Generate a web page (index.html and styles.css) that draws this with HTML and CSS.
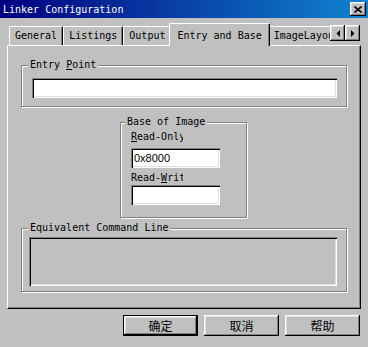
FILE: index.html
```html
<!DOCTYPE html>
<html lang="en">
  <head>
    <meta charset="UTF-8" />
    <title>Linker Configuration</title>
    <link rel="stylesheet" href="styles.css">
  </head>
  <body>
    <div class="titlebar">
      <span class="title">Linker Configuration</span>
      <div class="close">
        <svg width="8" height="7" viewBox="0 0 8 7">
          <path d="M0.5 0.5 L7.5 6.5 M7.5 0.5 L0.5 6.5" stroke="#000" stroke-width="1.6" fill="none" />
        </svg>
      </div>
    </div>

    <div class="tabstrip">
      <div class="tabs">
        <div class="tab">General</div>
        <div class="tab">Listings</div>
        <div class="tab">Output</div>
        <div class="tab active">Entry and Base</div>
        <div class="tab">ImageLayout</div>
      </div>
      <div class="scroll">
        <div class="arrow">
          <svg width="4" height="7" viewBox="0 0 4 7"><polygon points="4,0 4,7 0.5,3.5" fill="#000" /></svg>
        </div>
        <div class="arrow">
          <svg width="4" height="7" viewBox="0 0 4 7"><polygon points="0,0 0,7 3.5,3.5" fill="#000" /></svg>
        </div>
      </div>
    </div>

    <div class="panel">
      <div class="group entry">
        <div class="legend">Entry <u>P</u>oint</div>
        <div class="field entry-field"></div>
      </div>

      <div class="group base">
        <div class="legend">Base of Image</div>
        <div class="label"><u>R</u>ead-Only</div>
        <div class="field base-field">0x8000</div>
        <div class="label">Read-<u>W</u>rite</div>
        <div class="field base-field"></div>
      </div>

      <div class="group command">
        <div class="legend">Equivalent Command Line</div>
        <div class="field command-box"></div>
      </div>
    </div>

    <div class="buttons">
      <div class="btn default">确定</div>
      <div class="btn">取消</div>
      <div class="btn">帮助</div>
    </div>
  </body>
</html>
```

FILE: styles.css
```css
body {
  margin: 0;
  width: 368px;
  height: 347px;
  overflow: hidden;
  background-color: #c0c0c0;
  font-family: 'DejaVu Sans Mono', monospace;
  font-size: 10px;
  color: #000;
}
.titlebar {
  height: 18px;
  display: flex;
  align-items: center;
  padding-left: 3px;
  background: linear-gradient(to right, #000080 0%, #1084d0 100%);
  color: #fff;
}
.title {
  flex: 1;
}
.close {
  width: 16px;
  height: 14px;
  margin-right: 2px;
  display: flex;
  align-items: center;
  justify-content: center;
  background-color: #c0c0c0;
  box-shadow: inset -1px -1px #000, inset 1px 1px #fff, inset -2px -2px #808080,
    inset 2px 2px #dfdfdf;
}
.tabstrip {
  display: flex;
  height: 28px;
  margin: 0 8px -1px 7px;
  position: relative;
  z-index: 1;
}
.tabs {
  flex: 1;
  display: flex;
  align-items: flex-end;
  overflow: hidden;
  padding-left: 2px;
}
.tab {
  flex-shrink: 0;
  box-sizing: border-box;
  height: 19px;
  margin-bottom: 1px;
  padding: 0 5px;
  border: 1px solid #fff;
  border-bottom: 0;
  border-right-color: #000;
  border-radius: 2px 2px 0 0;
  box-shadow: inset -1px 0 #808080;
  line-height: 18px;
  white-space: nowrap;
}
.tab.active {
  height: 23px;
  margin: 0 -2px;
  padding: 3px 7px 0;
  background-color: #c0c0c0;
  position: relative;
}
.scroll {
  display: flex;
  align-self: flex-start;
  margin-top: 7px;
}
.arrow {
  width: 15px;
  height: 16px;
  display: flex;
  align-items: center;
  justify-content: center;
  background-color: #c0c0c0;
  box-shadow: inset -1px -1px #000, inset 1px 1px #fff, inset -2px -2px #808080,
    inset 2px 2px #dfdfdf;
}
.panel {
  margin-left: 7px;
  width: 354px;
  height: 264px;
  box-sizing: border-box;
  border: 1px solid;
  border-color: #fff #000 #000 #fff;
  box-shadow: inset -1px -1px #808080;
  overflow: hidden;
}
.group {
  box-sizing: border-box;
  border: 1px solid #808080;
  box-shadow: 1px 1px #fff, inset 1px 1px #fff;
}
.legend {
  width: fit-content;
  margin: -7px 0 0 6px;
  padding: 0 2px;
  background-color: #c0c0c0;
  line-height: 12px;
  white-space: nowrap;
}
.field {
  box-sizing: border-box;
  background-color: #fff;
  box-shadow: inset 1px 1px #808080, inset 2px 2px #000, inset -1px -1px #fff,
    inset -2px -2px #dfdfdf;
}
.entry {
  width: 326px;
  height: 42px;
  margin: 19px 0 0 13px;
}
.entry-field {
  width: 305px;
  height: 20px;
  margin: 7px 0 0 10px;
}
.base {
  width: 127px;
  height: 96px;
  margin: 15px 0 0 112px;
}
.base .legend {
  margin-left: 4px;
}
.label {
  width: 52px;
  margin: 3px 0 0 10px;
  line-height: 12px;
  white-space: nowrap;
  overflow: hidden;
}
.label + .field + .label {
  margin-top: 4px;
}
.base-field {
  width: 89px;
  height: 20px;
  margin: 5px 0 0 10px;
  padding: 2px 3px 0;
  font-family: 'Liberation Sans', Arial, sans-serif;
  font-size: 11px;
  line-height: 16px;
}
.label + .field + .label + .field {
  margin-top: 1px;
}
.command {
  width: 326px;
  height: 64px;
  margin: 10px 0 0 13px;
}
.command .legend {
  margin-left: 6px;
}
.command-box {
  width: 308px;
  height: 49px;
  margin: 3px 0 0 7px;
  background-color: #c0c0c0;
}
.buttons {
  display: flex;
  justify-content: flex-end;
  gap: 6px;
  margin-top: 6px;
  padding-right: 8px;
}
.btn {
  box-sizing: border-box;
  width: 75px;
  height: 21px;
  display: flex;
  align-items: center;
  justify-content: center;
  font-family: 'Noto Sans CJK SC', sans-serif;
  font-size: 12px;
  box-shadow: inset -1px -1px #000, inset 1px 1px #fff, inset -2px -2px #808080,
    inset 2px 2px #dfdfdf;
}
.btn.default {
  border: 1px solid #000;
}
```
